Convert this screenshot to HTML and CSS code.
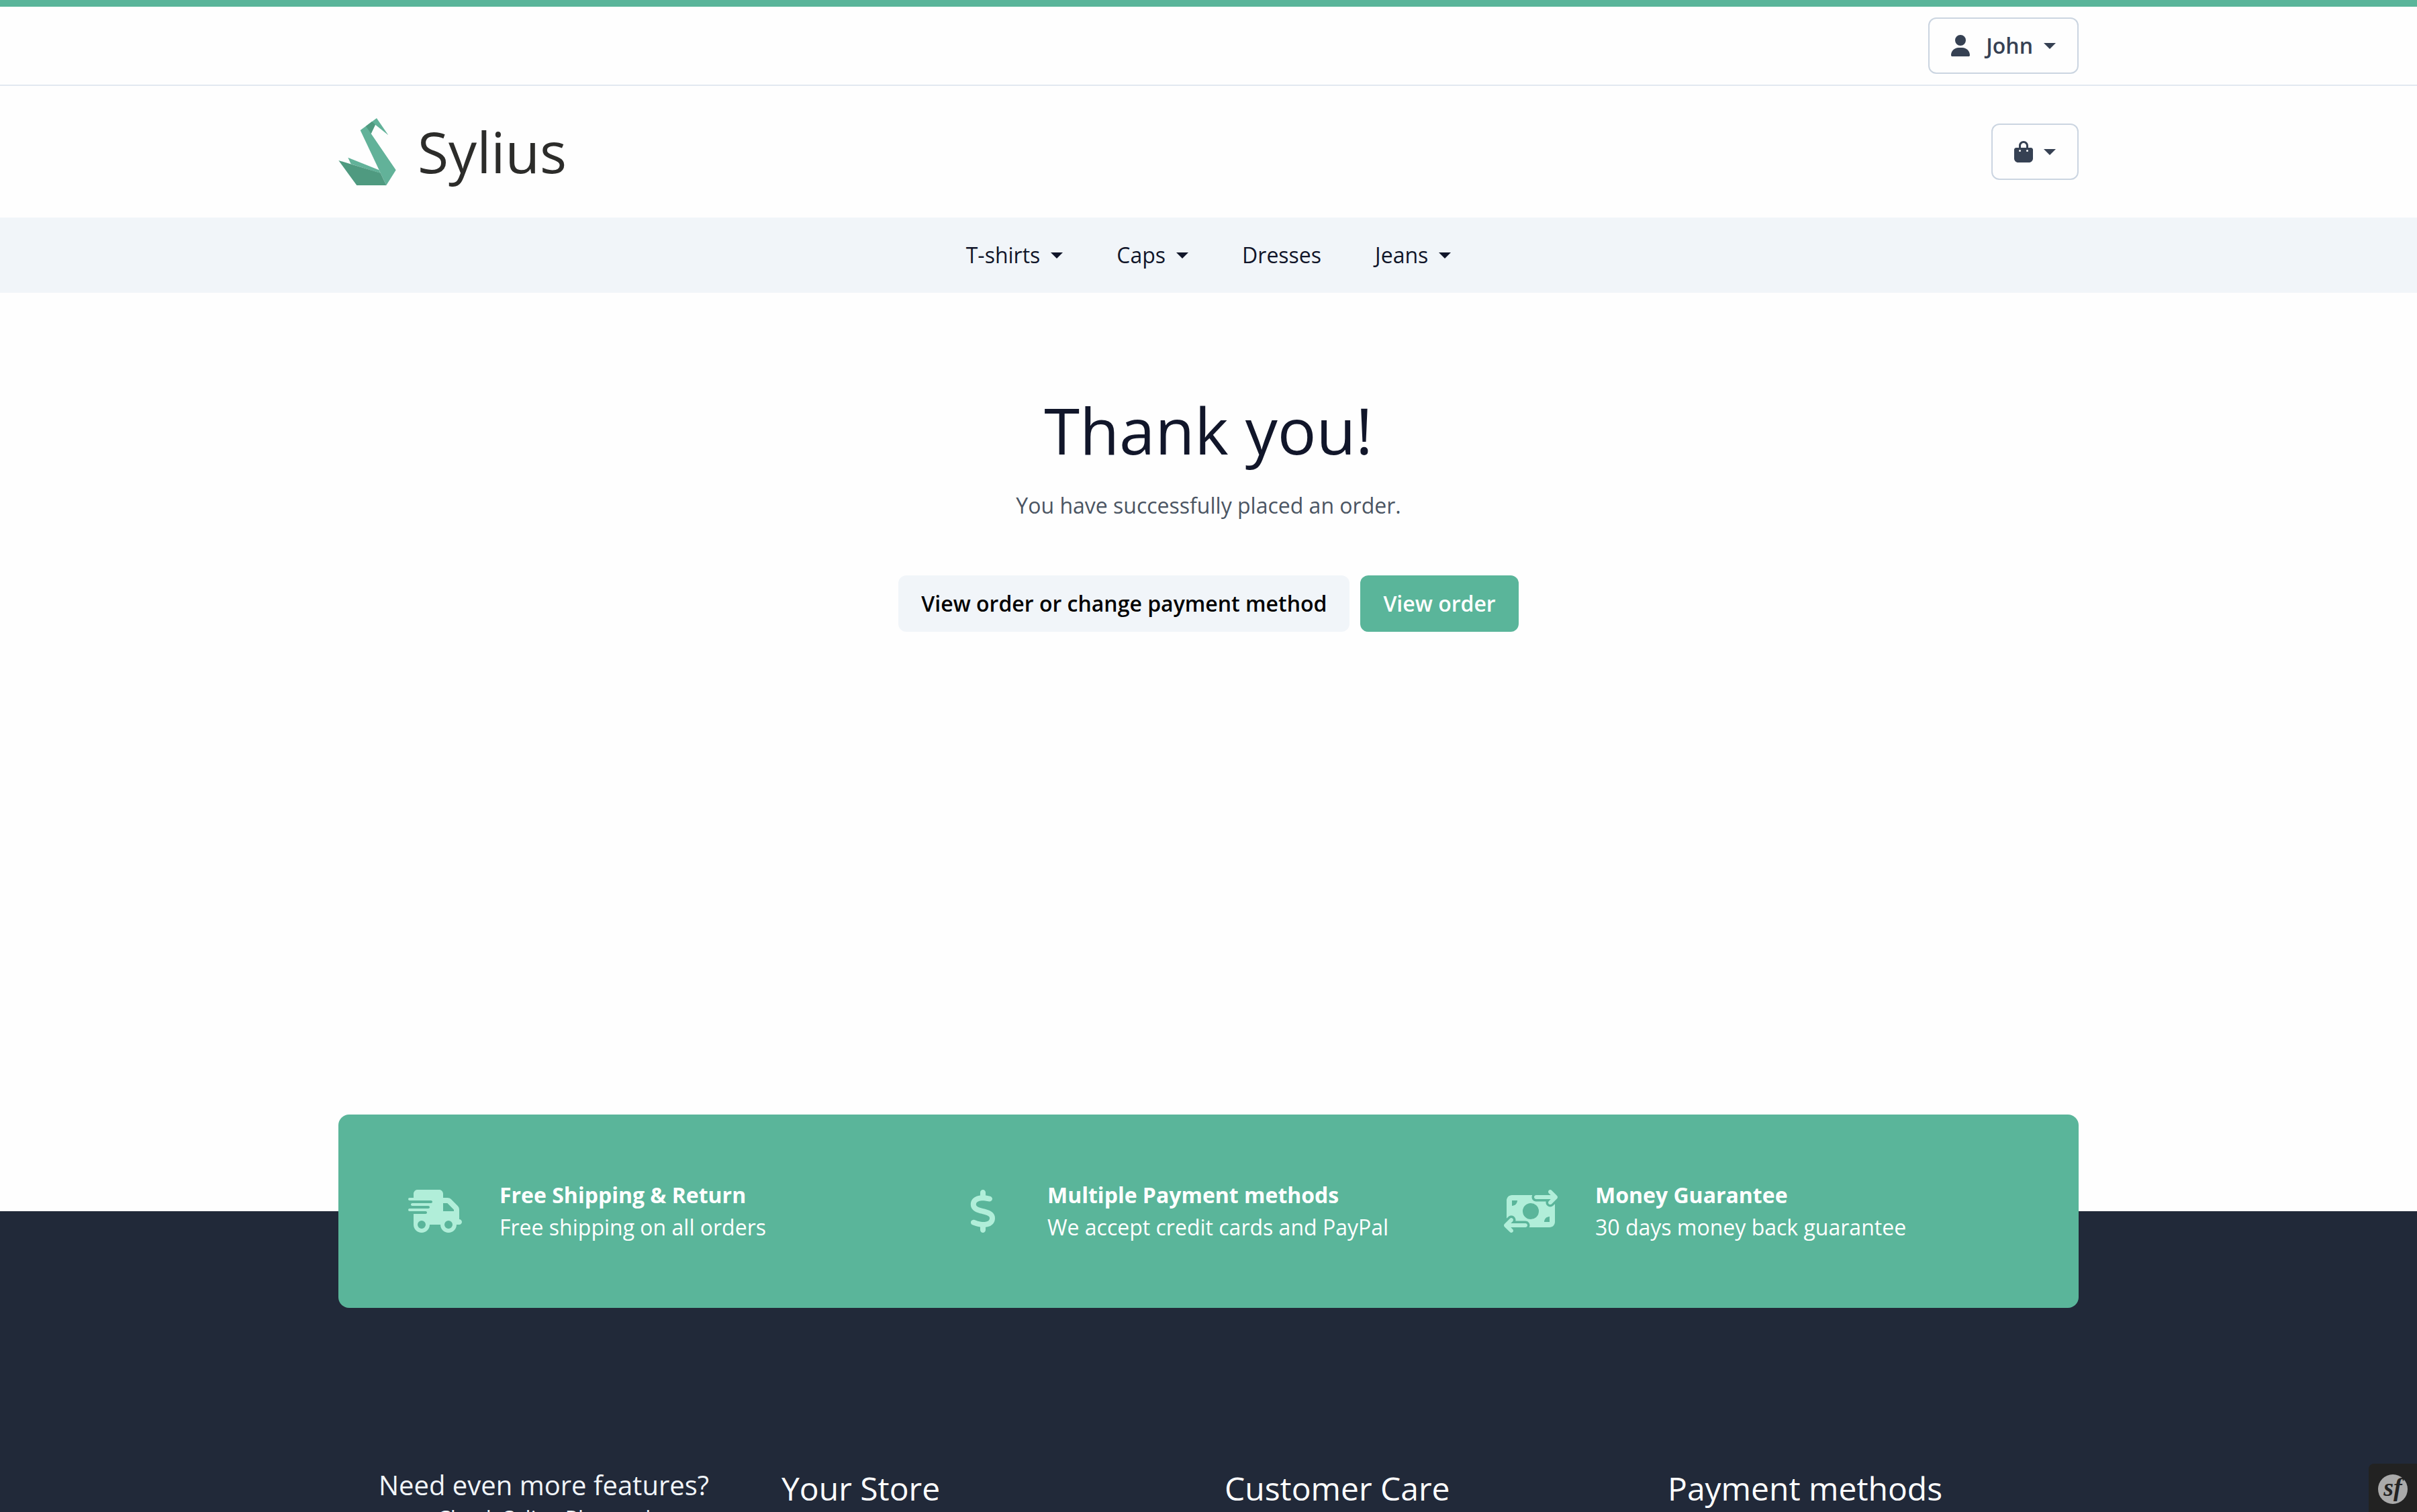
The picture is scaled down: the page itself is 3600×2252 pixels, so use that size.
FILE: index.html
```html
<!DOCTYPE html>
<html lang="en">
<head>
<meta charset="utf-8">
<title>Thank you! | Sylius</title>
<link rel="stylesheet" href="styles.css">
</head>
<body>
<div class="page">
  <header>
    <div class="topbar">
      <div class="container topbar-inner">
        <button class="btn btn-outline account" type="button">
          <svg class="icon" viewBox="0 0 448 512" aria-hidden="true"><path d="M224 256a128 128 0 1 0 0-256 128 128 0 1 0 0 256zm-45.700 48C79.800 304 0 383.800 0 482.300 0 498.700 13.300 512 29.700 512H418.300c16.400 0 29.700-13.300 29.700-29.700C448 383.800 368.200 304 269.700 304H178.300z"/></svg>
          <span>John</span>
          <span class="caret"></span>
        </button>
      </div>
    </div>
    <div class="container masthead">
      <a class="logo" href="#" aria-label="Sylius">
        <svg class="logo-mark" viewBox="0 0 256 300" aria-hidden="true">
          <path fill="#62b299" d="M170 0 222 76 164 29 145 69 256 232 213 300 187 245 181 232 97 54z"/>
          <path fill="#62b299" d="M42 176 181 232 187 246 55 205z"/>
          <path fill="#4f9a80" d="M0 189 187 245 213 300H81z"/>
          <path fill="#4f9a80" d="M149 15 164 29 145 69 122 36z"/>
        </svg>
        <span class="logo-text">Sylius</span>
      </a>
      <button class="btn btn-outline cart" type="button" aria-label="Cart">
        <svg class="icon" viewBox="0 0 448 512" aria-hidden="true"><path d="M160 112c0-35.300 28.700-64 64-64s64 28.700 64 64v48H160V112zm-48 48H48c-26.500 0-48 21.500-48 48V416c0 53 43 96 96 96H352c53 0 96-43 96-96V208c0-26.500-21.500-48-48-48H336V112C336 50.100 285.900 0 224 0S112 50.100 112 112v48zm24 48a24 24 0 1 1 0 48 24 24 0 1 1 0-48zm152 24a24 24 0 1 1 48 0 24 24 0 1 1 -48 0z"/></svg>
        <span class="caret"></span>
      </button>
    </div>
    <nav class="navbar">
      <a href="#">T-shirts <span class="caret"></span></a>
      <a href="#">Caps <span class="caret"></span></a>
      <a href="#">Dresses</a>
      <a href="#">Jeans <span class="caret"></span></a>
    </nav>
  </header>

  <main class="thanks">
    <h1>Thank you!</h1>
    <p>You have successfully placed an order.</p>
    <div class="actions">
      <a class="btn btn-light" href="#">View order or change payment method</a>
      <a class="btn btn-primary" href="#">View order</a>
    </div>
  </main>

  <footer class="footer">
    <div class="container">
      <div class="features">
        <div class="feature">
          <svg viewBox="0 0 640 512" aria-hidden="true"><path d="M112 0C85.500 0 64 21.500 64 48V96H16c-8.800 0-16 7.200-16 16s7.200 16 16 16H64 272c8.800 0 16 7.200 16 16s-7.200 16-16 16H64 48c-8.800 0-16 7.200-16 16s7.200 16 16 16H64 240c8.800 0 16 7.200 16 16s-7.200 16-16 16H64 16c-8.800 0-16 7.200-16 16s7.200 16 16 16H64 208c8.800 0 16 7.200 16 16s-7.200 16-16 16H64V416c0 53 43 96 96 96s96-43 96-96H384c0 53 43 96 96 96s96-43 96-96h32c17.700 0 32-14.300 32-32s-14.300-32-32-32V288 256 237.300c0-17-6.700-33.300-18.700-45.300L512 114.700c-12-12-28.300-18.700-45.300-18.700H416V48c0-26.500-21.500-48-48-48H112zM544 237.300V256H416V160h50.700L544 237.300zM160 368a48 48 0 1 1 0 96 48 48 0 1 1 0-96zm272 48a48 48 0 1 1 96 0 48 48 0 1 1 -96 0z"/></svg>
          <div><strong>Free Shipping &amp; Return</strong><br>Free shipping on all orders</div>
        </div>
        <div class="feature">
          <svg viewBox="0 0 320 512" aria-hidden="true"><path d="M160 0c17.700 0 32 14.300 32 32V67.700c1.600 .2 3.100 .4 4.700 .7c.4 .1 .7 .1 1.100 .2l48 8.800c17.400 3.200 28.900 19.900 25.700 37.200s-19.900 28.900-37.200 25.700l-47.500-8.700c-31.300-4.600-58.900-1.500-78.300 6.200s-27.200 18.300-29 28.100c-2 10.700-.5 16.700 1.200 20.400c1.800 3.900 5.500 8.300 12.800 13.200c16.300 10.700 41.300 17.700 73.700 26.300l2.900 .8c28.600 7.600 63.600 16.800 89.600 33.800c14.200 9.300 27.600 21.900 35.900 39.500c8.500 17.900 10.300 37.900 6.400 59.200c-6.900 38-33.100 63.400-65.600 76.700c-13.700 5.600-28.600 9.200-44.400 11V480c0 17.700-14.300 32-32 32s-32-14.300-32-32V445.100c-.4-.1-.9-.1-1.300-.2l-.2 0 0 0c-24.400-3.800-64.500-14.300-91.500-26.300c-16.100-7.200-23.400-26.100-16.200-42.200s26.100-23.400 42.200-16.200c20.900 9.300 55.300 18.500 75.200 21.600c31.900 4.700 58.200 2 76-5.300c16.900-6.900 24.600-16.900 26.800-28.900c1.900-10.600 .4-16.700-1.300-20.400c-1.900-4-5.600-8.400-13-13.300c-16.400-10.700-41.500-17.700-74-26.300l-2.800-.7 0 0C119.400 279.300 84.400 270 58.400 253c-14.200-9.300-27.500-22-35.800-39.600c-8.400-17.900-10.100-37.900-6.100-59.200C23.700 116 52.300 91.200 84.800 78.300c13.300-5.300 27.900-8.900 43.200-11V32c0-17.700 14.300-32 32-32z"/></svg>
          <div><strong>Multiple Payment methods</strong><br>We accept credit cards and PayPal</div>
        </div>
        <div class="feature">
          <svg viewBox="0 0 640 512" aria-hidden="true"><path d="M535 41c-9.400-9.400-9.400-24.600 0-33.900s24.600-9.400 33.900 0l64 64c4.500 4.500 7 10.600 7 17s-2.500 12.500-7 17l-64 64c-9.400 9.400-24.600 9.400-33.900 0s-9.400-24.600 0-33.900l23-23L384 112c-13.300 0-24-10.700-24-24s10.700-24 24-24l174.100 0L535 41zM105 377l-23 23L256 400c13.300 0 24 10.700 24 24s-10.700 24-24 24L81.900 448l23 23c9.400 9.400 9.400 24.600 0 33.900s-24.600 9.400-33.900 0L7 441c-4.500-4.500-7-10.600-7-17s2.500-12.500 7-17l64-64c9.400-9.400 24.600-9.400 33.900 0s9.400 24.600 0 33.900zM96 64H337.900c-3.700 7.200-5.900 15.300-5.900 24c0 28.700 23.300 52 52 52l117.400 0c-4 17 .6 35.500 13.800 48.800c20.300 20.300 53.200 20.300 73.500 0L608 169.500V384c0 35.300-28.700 64-64 64H302.100c3.700-7.200 5.900-15.300 5.900-24c0-28.700-23.300-52-52-52l-117.400 0c4-17-.6-35.500-13.800-48.800c-20.300-20.300-53.200-20.300-73.500 0L32 342.500V128c0-35.300 28.700-64 64-64zm64 64H96v64c35.300 0 64-28.700 64-64zM544 320c-35.300 0-64 28.700-64 64h64V320zM320 352a96 96 0 1 0 0-192 96 96 0 1 0 0 192z"/></svg>
          <div><strong>Money Guarantee</strong><br>30 days money back guarantee</div>
        </div>
      </div>
      <div class="footer-columns">
        <section class="plus">
          <h5>Need even more features?</h5>
          <p>Check Sylius Plus and</p>
        </section>
        <section><h4>Your Store</h4></section>
        <section><h4>Customer Care</h4></section>
        <section><h4>Payment methods</h4></section>
      </div>
    </div>
  </footer>
</div>
<button class="toolbar" type="button" aria-label="Show Symfony toolbar"><span class="toolbar-logo">sf</span></button>
</body>
</html>
```
FILE: styles.css
```css
* { box-sizing: border-box; }

body {
  margin: 0;
  background: #fefefe;
  color: #11162a;
  font-family: "Open Sans", sans-serif;
  font-size: 32px;
  line-height: 48px;
}

a { color: inherit; text-decoration: none; }
h1, h4, h5, p { margin: 0; font-weight: 400; }

/* One screen high; the footer runs on below the fold */
.page {
  display: flex;
  flex-direction: column;
  height: 100vh;
  overflow: hidden;
  border-top: 10px solid #5ab59a;
}

.container {
  width: 100%;
  max-width: 2640px;
  margin: 0 auto;
  padding: 0 24px;
}

.topbar { padding: 16px 0; border-bottom: 2px solid #e2e8f0; }
.topbar-inner { display: flex; justify-content: flex-end; }

.btn {
  display: inline-flex;
  align-items: center;
  min-height: 84px;
  padding: 16px 32px;
  border: 2px solid transparent;
  border-radius: 12px;
  font: 600 32px/48px "Open Sans", sans-serif;
}
.btn-outline { gap: 16px; border-color: #cbd5e1; background: transparent; color: #364153; }
.btn-light { background: #f1f5f9; color: #000; }
.btn-primary { background: #5ab59a; color: #fff; }
.account .icon { margin-right: 8px; }
.icon { width: 28px; height: 32px; fill: currentColor; }

.caret {
  display: inline-block;
  border: 9px solid transparent;
  border-top-color: currentColor;
  border-bottom-width: 0;
}

.masthead {
  display: flex;
  align-items: center;
  justify-content: space-between;
  padding-top: 48px;
  padding-bottom: 48px;
}
.logo { display: flex; align-items: center; gap: 32px; color: #2c2c2a; }
.logo-mark { width: 86px; height: 100px; }
.logo-text { font-size: 84px; line-height: 100px; font-weight: 500; }

.navbar {
  display: flex;
  justify-content: center;
  gap: 80px;
  padding: 32px;
  background: #f1f5f9;
}
.navbar a { display: flex; align-items: center; gap: 16px; }

.thanks {
  flex: 1;
  display: flex;
  flex-direction: column;
  align-items: center;
  padding-top: 144px;
}
.thanks h1 { margin-bottom: 29px; font-size: 96px; line-height: 120px; }
.thanks p { margin-bottom: 80px; color: #4b5563; }
.actions { display: flex; gap: 16px; }

.footer { height: 448px; background: #212939; color: #fff; }

.features {
  display: grid;
  grid-template-columns: repeat(3, 1fr);
  margin-top: -144px;
  padding: 96px 72px;
  border-radius: 16px;
  background: #5ab59a;
}
.feature { display: grid; grid-template-columns: 144px 1fr; gap: 24px; align-items: center; }
.feature svg { height: 64px; justify-self: center; fill: #b1eed9; }
.feature strong { font-weight: 700; }

.footer-columns {
  display: grid;
  grid-template-columns: repeat(4, 1fr);
  gap: 48px;
  padding-top: 240px;
}
.footer-columns h4 { font-size: 48px; line-height: 58px; }
.plus { text-align: center; color: #f1f5f9; }
.plus h5 { margin-bottom: 2px; font-size: 40px; line-height: 48px; }

.toolbar {
  position: fixed;
  right: 0;
  bottom: 0;
  display: flex;
  padding: 16px 14px 12px;
  border: 0;
  border-radius: 8px 0 0 0;
  background: #222;
}
.toolbar-logo {
  width: 44px;
  height: 44px;
  border-radius: 50%;
  background: #aaa;
  color: #222;
  font: italic 700 38px/38px "Liberation Serif", serif;
}
```
